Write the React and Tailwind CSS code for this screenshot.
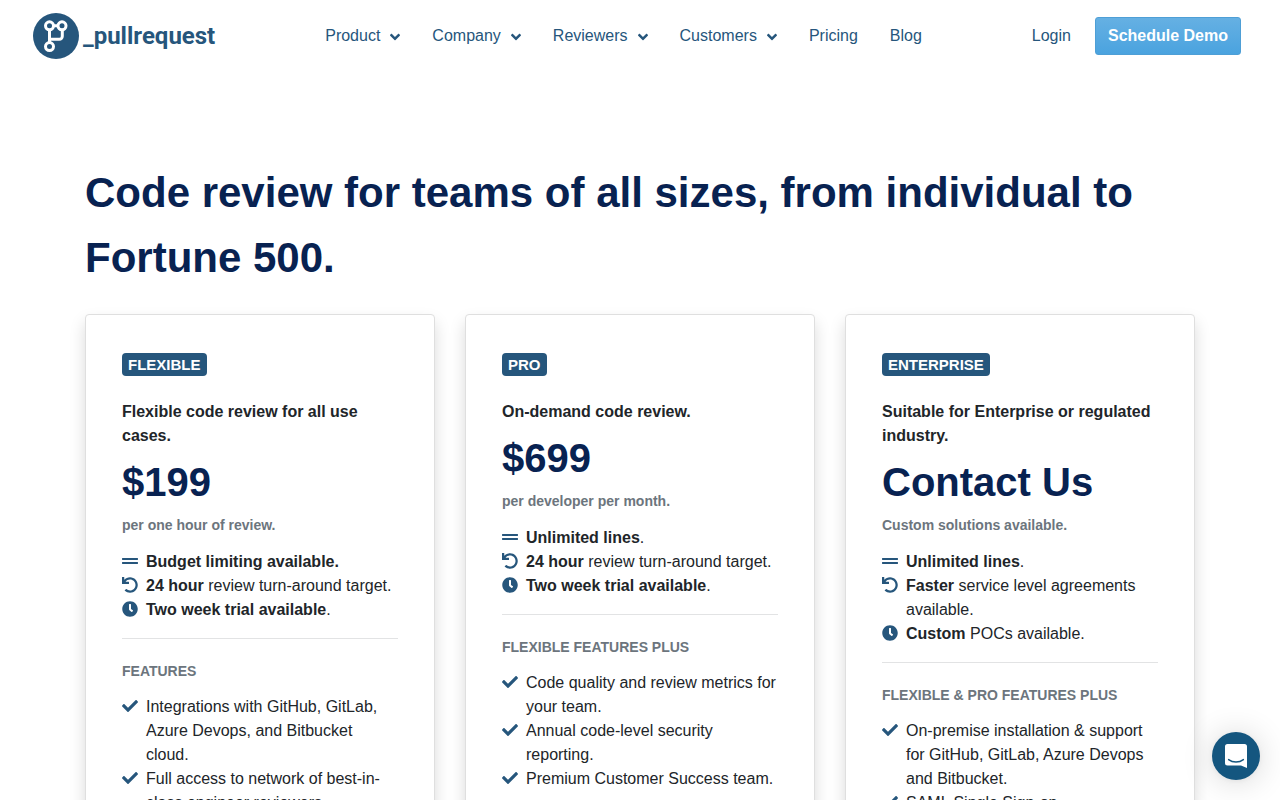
import React from "react";
import { FaAngleDown, FaGripLines, FaUndo, FaClock, FaCheck } from "react-icons/fa";

const navItems = [
  { label: "Product", menu: true },
  { label: "Company", menu: true },
  { label: "Reviewers", menu: true },
  { label: "Customers", menu: true },
  { label: "Pricing" },
  { label: "Blog" },
];

const plans = [
  {
    name: "FLEXIBLE",
    summary: "Flexible code review for all use cases.",
    price: "$199",
    unit: "per one hour of review.",
    facts: [
      { icon: FaGripLines, strong: "Budget limiting available.", rest: "" },
      { icon: FaUndo, strong: "24 hour", rest: " review turn-around target." },
      { icon: FaClock, strong: "Two week trial available", rest: "." },
    ],
    heading: "FEATURES",
    features: [
      "Integrations with GitHub, GitLab, Azure Devops, and Bitbucket cloud.",
      "Full access to network of best-in-class engineer reviewers.",
    ],
  },
  {
    name: "PRO",
    summary: "On-demand code review.",
    price: "$699",
    unit: "per developer per month.",
    facts: [
      { icon: FaGripLines, strong: "Unlimited lines", rest: "." },
      { icon: FaUndo, strong: "24 hour", rest: " review turn-around target." },
      { icon: FaClock, strong: "Two week trial available", rest: "." },
    ],
    heading: "FLEXIBLE FEATURES PLUS",
    features: [
      "Code quality and review metrics for your team.",
      "Annual code-level security reporting.",
      "Premium Customer Success team.",
    ],
  },
  {
    name: "ENTERPRISE",
    summary: "Suitable for Enterprise or regulated industry.",
    price: "Contact Us",
    unit: "Custom solutions available.",
    facts: [
      { icon: FaGripLines, strong: "Unlimited lines", rest: "." },
      { icon: FaUndo, strong: "Faster", rest: " service level agreements available." },
      { icon: FaClock, strong: "Custom", rest: " POCs available." },
    ],
    heading: "FLEXIBLE & PRO FEATURES PLUS",
    features: [
      "On-premise installation & support for GitHub, GitLab, Azure Devops and Bitbucket.",
      "SAML Single Sign-on.",
    ],
  },
];

function Logo() {
  return (
    <a href="#" className="flex items-center gap-1 text-[#26567c]">
      <svg viewBox="0 0 46 46" className="size-[46px]" aria-hidden="true">
        <circle cx="23" cy="23" r="23" fill="currentColor" />
        <g fill="none" stroke="#fff" strokeWidth="3">
          <circle cx="16.5" cy="12.8" r="4" />
          <circle cx="29" cy="12.8" r="4" />
          <circle cx="16.5" cy="33.6" r="4" />
          <path d="M20.500 12.800h4.500M16.500 16.800v12.800M29.300 16.800v6.500a3 3 0 0 1-3 3H16.500" />
        </g>
      </svg>
      <span className="font-['Roboto',sans-serif] text-2xl font-bold">_pullrequest</span>
    </a>
  );
}

function Header() {
  return (
    <header className="flex h-[72px] items-center justify-between pr-[39px] pl-[33px] text-[#26567c]">
      <Logo />
      <nav className="flex items-center gap-8">
        {navItems.map((item) =>
          item.menu ? (
            <button key={item.label} type="button" className="flex items-center gap-[10px]">
              {item.label}
              <FaAngleDown className="mt-[2px] h-4 w-[10px]" />
            </button>
          ) : (
            <a key={item.label} href="#">
              {item.label}
            </a>
          )
        )}
      </nav>
      <div className="flex items-center gap-6">
        <a href="#">Login</a>
        <button
          type="button"
          className="h-[38px] rounded-[3px] border border-[#4e9fd6] bg-linear-to-b from-[#65b0e3] to-[#4aa3df] px-3 font-bold text-white"
        >
          Schedule Demo
        </button>
      </div>
    </header>
  );
}

function ListRow({ icon: Icon, children }) {
  return (
    <li className="flex gap-2">
      <Icon className="mt-[3px] size-4 shrink-0 text-[#26567c]" />
      <span>{children}</span>
    </li>
  );
}

function PlanCard({ plan }) {
  return (
    <section className="rounded border border-[#dfdfdf] bg-white px-9 pt-[38px] pb-9 shadow-[0_8px_16px_rgba(0,0,0,0.15)]">
      <h2 className="w-fit rounded bg-[#26567c] px-[6px] text-[15px] leading-[23px] font-bold text-white">
        {plan.name}
      </h2>
      <p className="mt-6 font-bold">{plan.summary}</p>
      <p className="mt-[10px] text-[40px] leading-[48px] font-bold text-[#082251]">{plan.price}</p>
      <p className="mt-[9px] text-sm leading-[21px] font-bold text-[#6c757d]">{plan.unit}</p>
      <ul className="mt-[14px]">
        {plan.facts.map((fact) => (
          <ListRow key={fact.strong} icon={fact.icon}>
            <strong>{fact.strong}</strong>
            {fact.rest}
          </ListRow>
        ))}
      </ul>
      <hr className="my-4 border-[#e2e3e4]" />
      <h3 className="pt-[6px] text-sm leading-[21px] font-bold text-[#6c757d]">{plan.heading}</h3>
      <ul className="mt-[13px]">
        {plan.features.map((feature) => (
          <ListRow key={feature} icon={FaCheck}>
            {feature}
          </ListRow>
        ))}
      </ul>
    </section>
  );
}

function ChatLauncher() {
  return (
    <button
      type="button"
      aria-label="Open chat"
      className="fixed right-5 bottom-5 flex size-12 items-center justify-center rounded-full bg-[#14567f] shadow-[0_1px_6px_rgba(0,0,0,0.06),0_2px_32px_rgba(0,0,0,0.16)]"
    >
      <svg viewBox="0 0 22 24" className="h-6 w-[22px]" aria-hidden="true">
        <path d="M2.500 0h17A2.500 2.500 0 0 1 22 2.500V24l-6-2.400H2.500A2.500 2.500 0 0 1 0 19.100V2.500A2.500 2.500 0 0 1 2.500 0z" fill="#fff" />
        <path d="M3.600 15.600c4.200 3.200 10.600 3.200 14.800 0" fill="none" stroke="#14567f" strokeWidth="1.400" strokeLinecap="round" />
      </svg>
    </button>
  );
}

export default function App() {
  return (
    <div className="min-h-screen bg-white font-['Liberation_Sans',Arial,sans-serif] text-base leading-6 text-[#212529]">
      <Header />
      <main className="mx-auto max-w-[1110px] pt-[88px] pb-12">
        <h1 className="text-[42px] leading-[65px] font-bold text-[#082251]">
          Code review for teams of all sizes, from individual to Fortune 500.
        </h1>
        <div className="mt-6 grid grid-cols-3 gap-[30px]">
          {plans.map((plan) => (
            <PlanCard key={plan.name} plan={plan} />
          ))}
        </div>
      </main>
      <ChatLauncher />
    </div>
  );
}
